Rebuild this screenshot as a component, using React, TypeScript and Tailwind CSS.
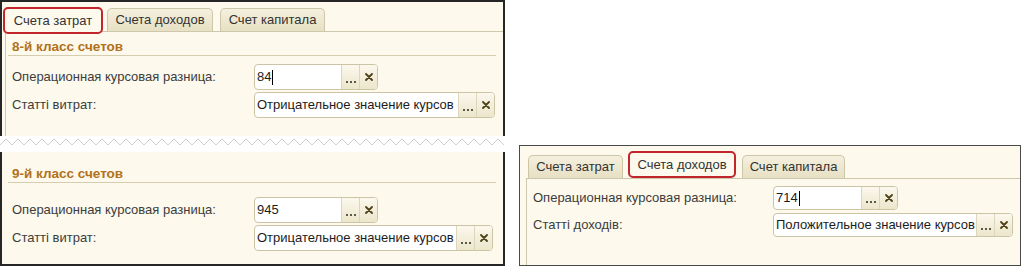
import React from "react";

const font = "font-['Liberation_Sans',Arial,sans-serif]";

function Cross() {
  return (
    <svg width="8" height="8" viewBox="0 0 8 8">
      <path d="M1 1 L7 7 M7 1 L1 7" stroke="#4f4118" strokeWidth="1.8" strokeLinecap="round" />
    </svg>
  );
}

function Input({ value, width, height, cursor }: { value: string; width: string; height: string; cursor?: boolean }) {
  return (
    <div className={`flex ${width} ${height} overflow-hidden rounded-[4px] border border-[#cbc5a6] bg-white`}>
      <div className="flex flex-1 items-center overflow-hidden whitespace-nowrap pl-[2px] text-[13px] text-[#1c1c1c]">
        {value}
        {cursor && <span className="ml-px inline-block h-[15px] w-px bg-black" />}
      </div>
      <div className="flex w-[18px] items-end justify-center border-l border-[#dcd6bb] bg-gradient-to-b from-[#fbf8ee] to-[#ece6cb] pb-[6px]">
        <span className="flex gap-[2px]">
          <span className="h-[2px] w-[2px] bg-[#5a5a4a]" />
          <span className="h-[2px] w-[2px] bg-[#5a5a4a]" />
          <span className="h-[2px] w-[2px] bg-[#5a5a4a]" />
        </span>
      </div>
      <div className="flex w-[18px] items-center justify-center border-l border-[#dcd6bb] bg-gradient-to-b from-[#fbf8ee] to-[#ece6cb]">
        <Cross />
      </div>
    </div>
  );
}

function Row({ label, children, labelWidth, className }: { label: string; children: React.ReactNode; labelWidth: string; className: string }) {
  return (
    <div className={`flex items-center ${className}`}>
      <div className={`${labelWidth} text-[13px] text-[#3c3c3c]`}>{label}</div>
      {children}
    </div>
  );
}

function Header({ text, className }: { text: string; className: string }) {
  return (
    <div className={`h-[17px] border-b border-[#d4cdb0] pl-[4px] text-[13.5px] font-bold leading-[16px] text-[#b2711a] ${className}`}>
      {text}
    </div>
  );
}

function ActiveTab({ text, className }: { text: string; className: string }) {
  return (
    <div className={`relative z-10 flex items-center justify-center rounded-[5px] border-2 border-[#c2262d] bg-[#fdf9ec] text-[13px] text-[#333] ${className}`}>
      {text}
    </div>
  );
}

function Tab({ text, className }: { text: string; className: string }) {
  return (
    <div className={`flex items-center justify-center rounded-t-[5px] border border-b-0 border-[#cdc7aa] bg-gradient-to-b from-[#f5f0de] to-[#e7e0c4] text-[13px] text-[#333] ${className}`}>
      {text}
    </div>
  );
}

function Zigzag() {
  const pts: string[] = [];
  for (let x = 0, i = 0; x <= 506; x += 6, i++) pts.push(`${x},${i % 2 === 0 ? 8 : 2}`);
  return (
    <div className="h-[16px] bg-white pt-[1px]">
      <svg width="505" height="10" viewBox="0 0 505 10">
        <polyline points={pts.join(" ")} fill="none" stroke="#cfcfcf" strokeWidth="1" />
      </svg>
    </div>
  );
}

export default function App() {
  return (
    <div className={`flex h-[267px] w-[1024px] bg-white ${font}`}>
      <div className="flex w-[505px] flex-col">
        <div className="flex h-[136px] flex-col border-2 border-b-0 border-[#262626] bg-[#fdf9ec]">
          <div className="flex h-[29px] items-end">
            <ActiveTab text="Счета затрат" className="-mb-[3px] ml-[1px] h-[27px] w-[100px]" />
            <Tab text="Счета доходов" className="ml-[4px] h-[23px] w-[106px]" />
            <Tab text="Счет капитала" className="ml-[7px] h-[23px] w-[105px]" />
          </div>
          <div className="ml-[3px] flex-1 border-l border-t border-[#cdc7ab]">
            <Header text="8-й класс счетов" className="ml-[2px] mr-[7px] mt-[7px]" />
            <Row label="Операционная курсовая разница:" labelWidth="w-[242px]" className="mt-[8px] pl-[6px]">
              <Input value="84" cursor width="w-[124px]" height="h-[26px]" />
            </Row>
            <Row label="Статті витрат:" labelWidth="w-[242px]" className="mt-[2px] pl-[6px]">
              <Input value="Отрицательное значение курсов" width="w-[241px]" height="h-[26px]" />
            </Row>
          </div>
        </div>
        <Zigzag />
        <div className="h-[114px] border-2 border-t-0 border-[#262626] bg-[#fdf9ec] pt-[14px]">
          <Header text="9-й класс счетов" className="ml-[6px] mr-[7px]" />
          <Row label="Операционная курсовая разница:" labelWidth="w-[242px]" className="mt-[14px] pl-[10px]">
            <Input value="945" width="w-[124px]" height="h-[26px]" />
          </Row>
          <Row label="Статті витрат:" labelWidth="w-[242px]" className="mt-[2px] pl-[10px]">
            <Input value="Отрицательное значение курсов" width="w-[239px]" height="h-[26px]" />
          </Row>
        </div>
      </div>
      <div className="w-[14px]" />
      <div className="mt-[145px] flex h-[121px] w-[502px] flex-col border border-[#4a4a4a] bg-[#fdf9ec]">
        <div className="flex h-[32px] items-end">
          <Tab text="Счета затрат" className="ml-[8px] h-[23px] w-[95px]" />
          <ActiveTab text="Счета доходов" className="ml-[5px] h-[27px] w-[108px]" />
          <Tab text="Счет капитала" className="ml-[6px] h-[23px] w-[103px]" />
        </div>
        <div className="ml-[6px] flex-1 border-l border-t border-[#cdc7ab]">
          <Row label="Операционная курсовая разница:" labelWidth="w-[240px]" className="mt-[7px] pl-[6px]">
            <Input value="714" cursor width="w-[125px]" height="h-[24px]" />
          </Row>
          <Row label="Статті доходів:" labelWidth="w-[240px]" className="mt-[3px] pl-[6px]">
            <Input value="Положительное значение курсов" width="w-[240px]" height="h-[24px]" />
          </Row>
        </div>
      </div>
    </div>
  );
}
